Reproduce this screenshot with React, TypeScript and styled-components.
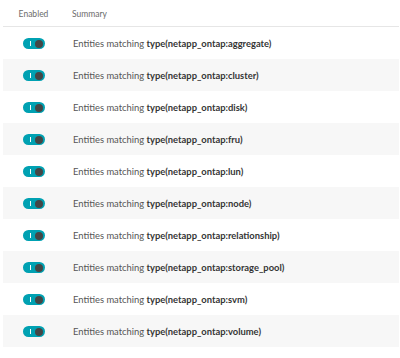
import React from "react";
import styled, { createGlobalStyle } from "styled-components";

const GlobalStyle = createGlobalStyle`
    body {
        margin: 0;
        background: #ffffff;
        font-family: Lato, "Open Sans", sans-serif;
    }
`;

const Table = styled.div`
    margin: 0 1px 0 3px;
    display: flex;
    flex-direction: column;
`;

const HeaderRow = styled.div`
    display: grid;
    grid-template-columns: 60px 1fr;
    height: 26px;
    align-items: center;
    border-bottom: 1px solid #e6e6e6;
    font-size: 8.5px;
    color: #6b6b6b;
`;

const Row = styled.div<{ $striped: boolean }>`
    display: grid;
    grid-template-columns: 60px 1fr;
    height: 32px;
    align-items: center;
    background: ${(p) => (p.$striped ? "#f7f7f7" : "#ffffff")};
`;

const Cell = styled.div<{ $center?: boolean }>`
    display: flex;
    justify-content: ${(p) => (p.$center ? "center" : "flex-start")};
    padding-left: ${(p) => (p.$center ? "1px" : "9px")};
    padding-top: 1px;
`;

const Summary = styled.span`
    font-size: 9.4px;
    color: #555555;
    padding-left: 10px;
`;

const Bold = styled.b`
    font-weight: 700;
    color: #353535;
`;

const Toggle = styled.span`
    position: relative;
    width: 22px;
    height: 11px;
    border-radius: 6px;
    background: #00a1b2;
    display: inline-block;
`;

const Mark = styled.span`
    position: absolute;
    left: 7px;
    top: 3px;
    width: 1px;
    height: 5px;
    background: #ffffff;
`;

const Knob = styled.span`
    position: absolute;
    right: 2px;
    top: 1.5px;
    width: 8px;
    height: 8px;
    border-radius: 50%;
    background: #454646;
`;

const types = [
	"aggregate",
	"cluster",
	"disk",
	"fru",
	"lun",
	"node",
	"relationship",
	"storage_pool",
	"svm",
	"volume",
];

const App = () => {
	return (
		<>
			<GlobalStyle />
			<Table>
				<HeaderRow>
					<Cell $center>Enabled</Cell>
					<Cell>Summary</Cell>
				</HeaderRow>
				{types.map((t, i) => (
					<Row key={t} $striped={i % 2 === 1}>
						<Cell $center>
							<Toggle>
								<Mark />
								<Knob />
							</Toggle>
						</Cell>
						<Summary>
							Entities matching <Bold>type(netapp_ontap:{t})</Bold>
						</Summary>
					</Row>
				))}
			</Table>
		</>
	);
};

export default App;
